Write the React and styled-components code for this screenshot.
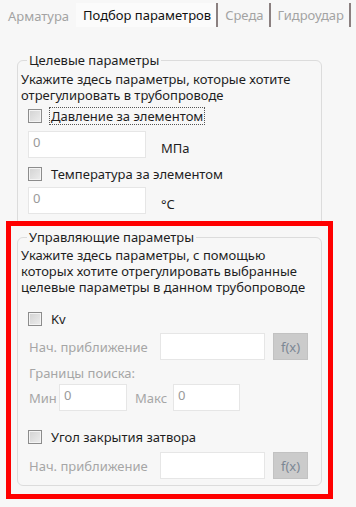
import styled, { createGlobalStyle } from "styled-components";

const GlobalStyle = createGlobalStyle`
  html, body {
    margin: 0;
    padding: 0;
    background: #f7f7f7;
  }
  body {
    font-family: "Noto Sans", "DejaVu Sans", sans-serif;
    font-size: 13px;
    color: #1e1e1e;
  }
`;

const Page = styled.div`
  width: 356px;
  height: 507px;
  overflow: hidden;
  background: #f7f7f7;
`;

const TabStrip = styled.div`
  display: flex;
  align-items: stretch;
  height: 32px;
`;

const Tab = styled.div`
  display: flex;
  align-items: center;
  padding: ${(p) => (p.$sep ? "0 5px 0 7px" : "0 7px 0 8px")};
  color: ${(p) => (p.$active ? "#111" : "#a3a3a3")};
  background: ${(p) => (p.$active ? "#fbfbfb" : "transparent")};
  border-right: ${(p) => (p.$sep ? "2px solid #8b8080" : "none")};
  margin: ${(p) => (p.$sep ? "3px 0 5px" : "0")};
  white-space: nowrap;
`;

const Content = styled.div`
  padding: 20px 34px 0 17px;
  display: flex;
  flex-direction: column;
`;

const Group = styled.fieldset`
  margin: 0;
  padding: 0 3px ${(p) => p.$pb || 0}px 3px;
  border: 1px solid #dcdcdc;
  border-radius: 6px;
  min-width: 0;
`;

const Legend = styled.legend`
  margin-left: 6px;
  padding: 0 2px;
  color: #1e1e1e;
  line-height: 16px;
`;

const Description = styled.div`
  line-height: 16px;
  margin-top: ${(p) => p.$mt ?? 1}px;
`;

const CheckRow = styled.label`
  display: flex;
  align-items: center;
  gap: 7px;
  margin-left: 7px;
  height: 20px;
  margin-top: ${(p) => p.$mt || 0}px;
`;

const Box = styled.span`
  width: 12px;
  height: 12px;
  border: 1px solid #8c8c8c;
  background: linear-gradient(135deg, #d2d2d2, #ededed);
  box-shadow: inset 0 0 0 1px #f4f4f4;
  flex: none;
`;

const CheckText = styled.span`
  padding: 0 1px;
  line-height: 16px;
  border: 1px ${(p) => (p.$focus ? "dotted #555" : "solid transparent")};
`;

const Row = styled.div`
  display: flex;
  align-items: center;
  margin-left: ${(p) => p.$ml ?? 7}px;
  margin-top: ${(p) => p.$mt || 0}px;
`;

const Field = styled.div`
  box-sizing: border-box;
  width: ${(p) => p.$w}px;
  height: 27px;
  background: #ffffff;
  border: 1px solid #e6e6e6;
  padding: 2px 4px;
  line-height: 16px;
  color: #9a9a9a;
  flex: none;
`;

const Unit = styled.span`
  margin-left: 15px;
  padding-top: 6px;
  color: #1e1e1e;
`;

const Muted = styled.span`
  color: #a6a6a6;
  width: ${(p) => (p.$w ? `${p.$w}px` : "auto")};
  margin-left: ${(p) => p.$ml || 0}px;
  flex: none;
`;

const FxButton = styled.div`
  box-sizing: border-box;
  width: 35px;
  height: 27px;
  margin-left: 8px;
  background: #cbcbcb;
  border: 1px solid #c2c2c2;
  color: #7b8794;
  display: flex;
  align-items: center;
  justify-content: center;
`;

const Highlight = styled.div`
  margin: -5px -11px 0;
  border: 5px solid #ff0000;
  padding: 3px 6px 8px;
  position: relative;
`;

export default function App() {
  return (
    <Page>
      <GlobalStyle />
      <TabStrip>
        <Tab>Арматура</Tab>
        <Tab $active $sep>Подбор параметров</Tab>
        <Tab $sep>Среда</Tab>
        <Tab $sep>Гидроудар</Tab>
      </TabStrip>
      <Content>
        <Group $pb={11}>
          <Legend>Целевые параметры</Legend>
          <Description $mt={3}>
            Укажите здесь параметры, которые хотите
            <br />
            отрегулировать в трубопроводе
          </Description>
          <CheckRow $mt={3}>
            <Box />
            <CheckText $focus>Давление за элементом</CheckText>
          </CheckRow>
          <Row $mt={5}>
            <Field $w={118}>0</Field>
            <Unit>МПа</Unit>
          </Row>
          <CheckRow $mt={6}>
            <Box />
            <CheckText>Температура за элементом</CheckText>
          </CheckRow>
          <Row $mt={3}>
            <Field $w={118}>0</Field>
            <Unit>°C</Unit>
          </Row>
        </Group>
        <Highlight>
          <Group $pb={6}>
            <Legend>Управляющие параметры</Legend>
            <Description $mt={2}>
              Укажите здесь параметры, с помощью
              <br />
              которых хотите отрегулировать выбранные
              <br />
              целевые параметры в данном трубопроводе
            </Description>
            <CheckRow $mt={14}>
              <Box />
              <CheckText>Kv</CheckText>
            </CheckRow>
            <Row $mt={4} $ml={8}>
              <Muted $w={131}>Нач. приближение</Muted>
              <Field $w={105} />
              <FxButton>f(x)</FxButton>
            </Row>
            <Row $mt={4} $ml={8}>
              <Muted>Границы поиска:</Muted>
            </Row>
            <Row $mt={2} $ml={8}>
              <Muted $w={30}>Мин</Muted>
              <Field $w={68}>0</Field>
              <Muted $w={38} $ml={8}>Макс</Muted>
              <Field $w={67}>0</Field>
            </Row>
            <CheckRow $mt={16}>
              <Box />
              <CheckText>Угол закрытия затвора</CheckText>
            </CheckRow>
            <Row $mt={5} $ml={8}>
              <Muted $w={131}>Нач. приближение</Muted>
              <Field $w={105} />
              <FxButton>f(x)</FxButton>
            </Row>
          </Group>
        </Highlight>
      </Content>
    </Page>
  );
}
